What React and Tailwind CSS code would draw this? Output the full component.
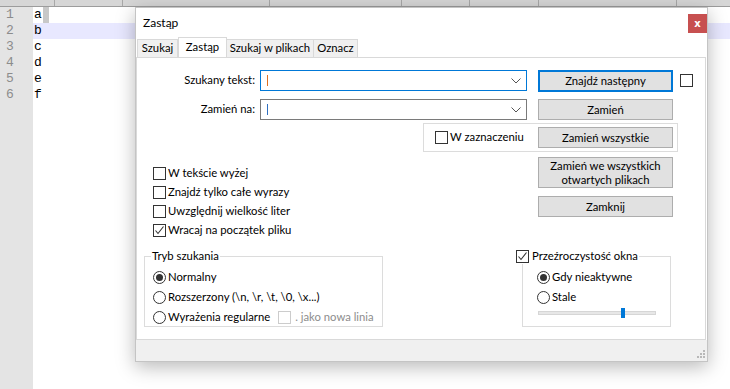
import React from 'react';

const lines = ['a', 'b', 'c', 'd', 'e', 'f'];
const strip = [55, 68, 147, 132, 68, 69, 138];

const CheckBox = ({ checked, disabled }) => (
  <span
    className={`w-[13px] h-[13px] shrink-0 border bg-white flex items-center justify-center ${
      disabled ? 'border-[#cccccc]' : 'border-[#333333]'
    }`}
  >
    {checked && (
      <svg width="11" height="11" viewBox="0 0 11 11">
        <path d="M1.5 5.5 L4 8.5 L9.5 1.5" fill="none" stroke="#333" strokeWidth="1.1" />
      </svg>
    )}
  </span>
);

const Radio = ({ checked }) => (
  <span className="w-[13px] h-[13px] shrink-0 rounded-full border border-[#333333] bg-white flex items-center justify-center">
    {checked && <span className="w-[7px] h-[7px] rounded-full bg-[#333333]" />}
  </span>
);

const Combo = ({ focused, caret }) => (
  <div
    className={`ml-[5px] w-[267px] h-[21px] bg-white border flex items-center justify-between pl-[6px] pr-[5px] ${
      focused ? 'border-[#0078d7]' : 'border-[#7a7a7a]'
    }`}
  >
    <span className={`w-[1px] h-[11px] ${caret}`} />
    <svg width="10" height="6" viewBox="0 0 10 6">
      <path d="M0.5 0.5 L5 5 L9.5 0.5" fill="none" stroke="#555" strokeWidth="1" />
    </svg>
  </div>
);

const Btn = ({ children, focused, className = '' }) => (
  <div
    className={`w-[135px] shrink-0 bg-[#e1e1e1] flex items-center justify-center text-center leading-[14px] text-black ${
      focused ? 'border-2 border-[#0078d7]' : 'border border-[#adadad]'
    } ${className}`}
  >
    {children}
  </div>
);

const Check = ({ children, checked }) => (
  <div className="h-[19px] flex items-center gap-[2px] whitespace-nowrap">
    <CheckBox checked={checked} />
    <span>{children}</span>
  </div>
);

const RadioRow = ({ children, checked }) => (
  <div className="h-[20px] flex items-center gap-[2px] whitespace-nowrap">
    <Radio checked={checked} />
    {children}
  </div>
);

export default function App() {
  return (
    <div className="w-[730px] h-[389px] relative overflow-hidden bg-white flex flex-col font-['Lato',sans-serif] text-[11.3px] text-black">
      {/* toolbar edge */}
      <div className="h-[7px] shrink-0 bg-[#d6d6d6] border-b border-[#9c9c9c] flex">
        {strip.map((w, i) => (
          <div key={i} style={{ width: w }} className="h-full border-r border-[#a8a8a8]" />
        ))}
      </div>

      {/* editor */}
      <div className="flex flex-1 font-['Liberation_Mono',monospace] text-[13px]">
        <div className="w-[33px] bg-[#e4e4e4] text-[#8c8c8c]">
          {lines.map((_, i) => (
            <div key={i} className="h-[16px] leading-[16px] pl-[6px]">
              {i + 1}
            </div>
          ))}
        </div>
        <div className="flex-1">
          {lines.map((l, i) => (
            <div
              key={i}
              className={`h-[16px] leading-[16px] flex pl-[1px] ${i === 1 ? 'bg-[#e8e8ff]' : ''}`}
            >
              <span>{l}</span>
              {i === 0 && <span className="ml-[1px] w-[6px] h-[16px] bg-[#c8c8c8]" />}
            </div>
          ))}
        </div>
      </div>

      {/* Replace dialog */}
      <div className="absolute left-[135px] top-[7px] w-[573px] h-[355px] bg-white border border-[#c4c4c4] shadow-[0_5px_18px_rgba(0,0,0,0.28)] flex flex-col">
        <div className="h-[29px] flex justify-between">
          <span className="pl-[7px] pt-[7px] leading-[16px] text-[12px]">Zastąp</span>
          <div className="mt-[6px] w-[19px] h-[19px] bg-[#c75050] text-white font-bold text-[10px] leading-none flex items-center justify-center font-['DejaVu_Sans',sans-serif]">
            x
          </div>
        </div>

        {/* tabs */}
        <div className="h-[20px] flex items-end ml-[1px] whitespace-nowrap">
          <div className="w-[41px] h-[18px] bg-[#f0f0f0] border border-b-0 border-[#d9d9d9] flex items-center justify-center">Szukaj</div>
          <div className="w-[49px] h-[20px] bg-white border border-b-0 border-[#d9d9d9] flex items-center justify-center pb-[1px]">Zastąp</div>
          <div className="w-[87px] h-[18px] bg-[#f0f0f0] border border-b-0 border-l-0 border-[#d9d9d9] flex items-center justify-center">Szukaj w plikach</div>
          <div className="w-[44px] h-[18px] bg-[#f0f0f0] border border-b-0 border-l-0 border-[#d9d9d9] flex items-center justify-center">Oznacz</div>
        </div>

        {/* panel */}
        <div className="h-[283px] mr-[1px] border border-[#d9d9d9] bg-white flex flex-col">
          <div className="mt-[12px] flex items-center h-[21px]">
            <span className="w-[118px] text-right">Szukany tekst:</span>
            <Combo focused caret="bg-[#e07020]" />
            <Btn focused className="ml-[11px] h-[22px]">Znajdź następny</Btn>
            <span className="ml-[7px]"><CheckBox /></span>
          </div>
          <div className="mt-[8px] flex items-center h-[21px]">
            <span className="w-[118px] text-right">Zamień na:</span>
            <Combo caret="bg-[#2f6fc0]" />
            <Btn className="ml-[11px] h-[21px]">Zamień</Btn>
          </div>

          <div className="flex h-[119px]">
            <div className="w-[286px] pl-[16px] pt-[44px]">
              <Check>W tekście wyżej</Check>
              <Check>Znajdź tylko całe wyrazy</Check>
              <Check>Uwzględnij wielkość liter</Check>
              <Check checked>Wracaj na początek pliku</Check>
            </div>
            <div className="flex flex-col">
              <div className="mt-[3px] w-[255px] h-[29px] border border-[#dcdcdc] flex items-center pl-[11px] pr-[4px] whitespace-nowrap">
                <CheckBox />
                <span className="ml-[2px]">W zaznaczeniu</span>
                <Btn className="ml-auto h-[21px]">Zamień wszystkie</Btn>
              </div>
              <Btn className="ml-[115px] mt-[5px] h-[31px]">
                Zamień we wszystkich
                <br />
                otwartych plikach
              </Btn>
              <Btn className="ml-[115px] mt-[8px] h-[21px]">Zamknij</Btn>
            </div>
          </div>

          <div className="mt-[9px] flex">
            <fieldset className="ml-[7px] w-[239px] h-[79px] shrink-0 border border-[#dcdcdc] pl-[8px] pt-[3px]">
              <legend className="-ml-[2px] px-[1px] leading-[16px]">Tryb szukania</legend>
              <RadioRow checked>
                <span>Normalny</span>
              </RadioRow>
              <RadioRow>
                <span>Rozszerzony (\n, \r, \t, \0, \x...)</span>
              </RadioRow>
              <RadioRow>
                <span>Wyrażenia regularne</span>
                <span className="ml-[6px]"><CheckBox disabled /></span>
                <span className="ml-[2px] text-[#8d8d8d]">. jako nowa linia</span>
              </RadioRow>
            </fieldset>

            <fieldset className="ml-[139px] w-[149px] h-[79px] shrink-0 border border-[#dcdcdc] pl-[14px] pt-[3px]">
              <legend className="-ml-[21px] pr-[1px] leading-[16px] flex items-center gap-[3px] whitespace-nowrap">
                <CheckBox checked />
                <span>Przeźroczystość okna</span>
              </legend>
              <RadioRow checked>
                <span>Gdy nieaktywne</span>
              </RadioRow>
              <RadioRow>
                <span>Stale</span>
              </RadioRow>
              <div className="h-[12px] flex items-center">
                <div className="relative ml-[1px] w-[118px] h-[4px] bg-[#e7e7e7] border border-[#d6d6d6]">
                  <span className="absolute left-[82px] -top-[4px] w-[4px] h-[10px] bg-[#0078d7]" />
                </div>
              </div>
            </fieldset>
          </div>
        </div>

        {/* footer */}
        <div className="flex-1 bg-[#f0f0f0] flex items-end justify-end pr-[1px] pb-[2px]">
          <svg width="9" height="9" viewBox="0 0 9 9">
            <rect x="6" y="0" width="2" height="2" fill="#b8b8b8" />
            <rect x="3" y="3" width="2" height="2" fill="#b8b8b8" />
            <rect x="6" y="3" width="2" height="2" fill="#b8b8b8" />
            <rect x="0" y="6" width="2" height="2" fill="#b8b8b8" />
            <rect x="3" y="6" width="2" height="2" fill="#b8b8b8" />
            <rect x="6" y="6" width="2" height="2" fill="#b8b8b8" />
          </svg>
        </div>
      </div>
    </div>
  );
}
